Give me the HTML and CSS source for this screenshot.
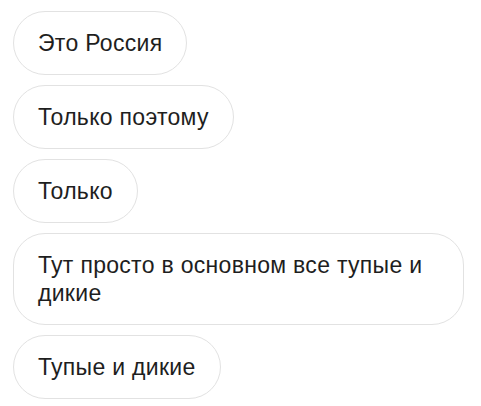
FILE: index.html
```html
<!DOCTYPE html>
<html lang="ru">
<head>
<meta charset="utf-8">
<link rel="stylesheet" href="styles.css">
</head>
<body>
<div class="chat">
  <div class="prev-edge"></div>
  <div class="bubble">Это Россия</div>
  <div class="bubble">Только поэтому</div>
  <div class="bubble">Только</div>
  <div class="bubble">Тут просто в основном все тупые и дикие</div>
  <div class="bubble">Тупые и дикие</div>
</div>
</body>
</html>
```

FILE: styles.css
```css
html, body {
  margin: 0;
  padding: 0;
  background: #ffffff;
}
body {
  width: 481px;
  height: 406px;
  overflow: hidden;
  font-family: "Liberation Sans", Arial, sans-serif;
}
.chat {
  display: flex;
  flex-direction: column;
  align-items: flex-start;
  gap: 10px;
  padding-left: 13px;
}
.prev-edge {
  align-self: stretch;
  height: 0;
  margin-left: 40px;
  margin-top: -8px;
  margin-bottom: 8px;
  border-bottom: 1px solid #ececec;
  border-bottom-left-radius: 30px;
}
.bubble {
  box-sizing: border-box;
  max-width: 451px;
  padding: 17px 24px 17px 24px;
  border: 1.5px solid #e2e2e2;
  border-radius: 32px;
  font-size: 23px;
  line-height: 28px;
  letter-spacing: 0.3px;
  color: #1e1e1e;
}
```
